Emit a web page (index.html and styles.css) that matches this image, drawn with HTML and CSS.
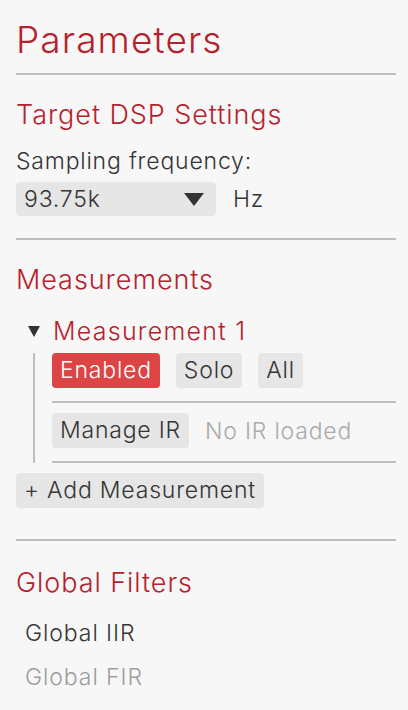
FILE: index.html
```html
<!DOCTYPE html>
<html>
<head>
<meta charset="utf-8">
<link rel="stylesheet" href="styles.css">
</head>
<body>
<div class="panel">
  <h1 class="title">Parameters</h1>
  <hr class="rule">
  <h2 class="section-title first">Target DSP Settings</h2>
  <div class="field-label">Sampling frequency:</div>
  <div class="select-row">
    <div class="select">
      <span class="select-value">93.75k</span>
      <svg class="select-arrow" width="20" height="13" viewBox="0 0 20 13"><polygon points="0,0 20,0 10,13" fill="#333"/></svg>
    </div>
    <span class="unit">Hz</span>
  </div>
  <hr class="rule">
  <h2 class="section-title">Measurements</h2>
  <div class="measurement">
    <div class="meas-head">
      <svg class="disclosure" width="12" height="11" viewBox="0 0 12 11"><polygon points="0,0 12,0 6,11" fill="#333"/></svg>
      <span class="meas-name">Measurement 1</span>
    </div>
    <div class="meas-body">
      <div class="btn-row">
        <span class="btn active">Enabled</span>
        <span class="btn">Solo</span>
        <span class="btn">All</span>
      </div>
      <hr class="rule inner">
      <div class="btn-row">
        <span class="btn">Manage IR</span>
        <span class="hint">No IR loaded</span>
      </div>
      <hr class="rule inner">
    </div>
  </div>
  <span class="btn add">+ Add Measurement</span>
  <hr class="rule">
  <h2 class="section-title global">Global Filters</h2>
  <div class="filters">
    <div class="filter-item">Global IIR</div>
    <div class="filter-item dim">Global FIR</div>
  </div>
</div>
</body>
</html>
```

FILE: styles.css
```css
html, body {
  margin: 0;
  padding: 0;
  background: #f7f7f7;
}
body {
  font-family: "Inter", "Noto Sans", sans-serif;
  font-weight: 300;
  letter-spacing: 0.05em;
  color: #353535;
}
.panel {
  padding: 0 12px 0 16px;
}
.title {
  margin: 18px 0 11px;
  font-size: 37px;
  line-height: 44px;
  font-weight: 300;
  letter-spacing: 0.03em;
  color: #b5222e;
}
.rule {
  display: block;
  border: 0;
  height: 2px;
  background: #bdbdbd;
  margin: 0;
}
.section-title {
  margin: 23px 0 0;
  font-size: 27px;
  line-height: 34px;
  font-weight: 300;
  letter-spacing: 0.035em;
  color: #b5222e;
}
.section-title.global {
  margin-top: 25px;
}
.field-label {
  font-size: 23px;
  line-height: 30px;
  margin-top: 14px;
}
.select-row {
  display: flex;
  align-items: center;
  gap: 17px;
  margin-top: 6px;
  margin-bottom: 22px;
}
.select {
  width: 200px;
  height: 34px;
  box-sizing: border-box;
  background: #e6e6e6;
  border-radius: 4px;
  display: flex;
  align-items: center;
  justify-content: space-between;
  padding: 0 12px 0 8px;
  font-size: 23px;
}
.unit {
  font-size: 23px;
}
.measurement {
  margin-top: 17px;
}
.meas-head {
  display: flex;
  align-items: center;
  height: 34px;
  padding-left: 12px;
}
.disclosure {
  margin-right: 13px;
}
.meas-name {
  font-size: 25px;
  line-height: 34px;
  letter-spacing: 0.05em;
  color: #b5222e;
}
.meas-body {
  margin: 5px 0 0 17px;
  border-left: 2px solid #bdbdbd;
  padding-left: 17px;
}
.btn-row {
  display: flex;
  align-items: center;
  gap: 16px;
}
.rule.inner {
  margin: 13px 0 10px;
}
.rule.inner:last-child {
  margin-bottom: 0;
}
.btn {
  display: inline-block;
  height: 35px;
  line-height: 35px;
  padding: 0 8px;
  background: #e6e6e6;
  border-radius: 4px;
  font-size: 23px;
  color: #353535;
}
.btn.active {
  background: #dc4446;
  color: #fff;
}
.hint {
  font-size: 23px;
  color: #ababab;
}
.add {
  margin-top: 10px;
  margin-bottom: 31px;
}
.filters {
  margin-top: 11px;
  padding-left: 9px;
}
.filter-item {
  font-size: 23px;
  line-height: 44px;
  letter-spacing: 0.04em;
}
.filter-item.dim {
  color: #9d9d9d;
}
```
